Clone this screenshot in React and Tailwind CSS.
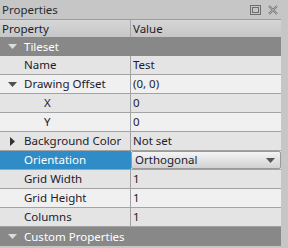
import React from 'react';

const font = { fontFamily: '"Noto Sans", "Open Sans", sans-serif' };

function Down({ light }) {
  return (
    <svg width="9" height="5" viewBox="0 0 9 5" className="shrink-0">
      <path d="M0 0h9L4.5 5z" fill={light ? '#dcdcdc' : '#505050'} />
    </svg>
  );
}

function Right() {
  return (
    <svg width="5" height="9" viewBox="0 0 5 9" className="shrink-0">
      <path d="M0 0l5 4.5L0 9z" fill="#333" />
    </svg>
  );
}

function Group({ label }) {
  return (
    <div className="flex h-[19px] items-center bg-[#888888] text-white">
      <div className="flex w-[22px] justify-center pl-[2px]">
        <Down light />
      </div>
      <span className="pl-[2px]">{label}</span>
    </div>
  );
}

function Row({ label, value, indent = 0, arrow, dark, children }) {
  return (
    <div className={`flex h-[19px] border-b border-[#a3a3a3] ${dark ? 'bg-[#e4e4e4]' : 'bg-[#f0f0f0]'}`}>
      <div className="flex w-[131px] shrink-0 items-center border-r border-[#a3a3a3]">
        <div className="flex w-[22px] justify-center pl-[2px]">
          {arrow === 'down' && <Down />}
          {arrow === 'right' && <Right />}
        </div>
        <span className="pl-[2px] text-[#1b1b2e]" style={{ paddingLeft: 2 + indent }}>
          {label}
        </span>
      </div>
      <div className="flex flex-1 items-center pl-[2px] text-[#1b1b2e]">{value ?? children}</div>
    </div>
  );
}

export default function App() {
  return (
    <div className="flex h-[248px] w-[288px] flex-col bg-[#c6c6c6] text-[11.5px] leading-none" style={font}>
      <div className="flex h-[19px] items-center justify-between pl-[2px] pr-[10px] text-[#2a2a2a]">
        <span>Properties</span>
        <div className="flex items-center gap-[7px]">
          <svg width="11" height="10" viewBox="0 0 11 10">
            <rect x="0.5" y="0.5" width="10" height="9" fill="none" stroke="#6e6e6e" />
            <rect x="2.5" y="2.5" width="6" height="5" fill="none" stroke="#6e6e6e" />
          </svg>
          <svg width="10" height="10" viewBox="0 0 10 10">
            <path d="M1 1l8 8M9 1l-8 8" stroke="#7a7a7a" strokeWidth="2" />
            <path d="M1 1l8 8M9 1l-8 8" stroke="#c6c6c6" strokeWidth="0.6" />
          </svg>
        </div>
      </div>
      <div className="mr-[7px] flex flex-col">
        <div className="flex h-[18px] border-t border-[#9c9c9c] bg-gradient-to-b from-[#d6d6d6] to-[#c6c6c6] text-[#1b1b2e]">
          <div className="flex w-[131px] items-center border-r border-[#a8a8a8] pl-[2px]">Property</div>
          <div className="flex items-center pl-[2px]">Value</div>
        </div>
        <Group label="Tileset" />
        <Row label="Name" value="Test" dark />
        <Row label="Drawing Offset" value="(0, 0)" arrow="down" />
        <Row label="X" value="0" indent={20} dark />
        <Row label="Y" value="0" indent={20} />
        <Row label="Background Color" value="Not set" arrow="right" dark />
        <div className="flex h-[19px] border-b border-[#a3a3a3] bg-[#f0f0f0]">
          <div className="flex w-[131px] shrink-0 items-center bg-[#308cc6] text-white">
            <div className="w-[22px]" />
            <span className="pl-[2px]">Orientation</span>
          </div>
          <div className="flex flex-1 items-stretch">
            <div className="flex flex-1 items-center justify-between rounded-[2px] border border-[#9a9a9a] bg-gradient-to-b from-[#f4f4f4] to-[#d2d2d2] pl-[3px] pr-[5px] text-[#1b1b2e]">
              <span>Orthogonal</span>
              <svg width="9" height="5" viewBox="0 0 9 5">
                <path d="M0 0h9L4.5 5z" fill="#555" />
              </svg>
            </div>
          </div>
        </div>
        <Row label="Grid Width" value="1" dark />
        <Row label="Grid Height" value="1" />
        <Row label="Columns" value="1" dark />
        <Group label="Custom Properties" />
      </div>
    </div>
  );
}
